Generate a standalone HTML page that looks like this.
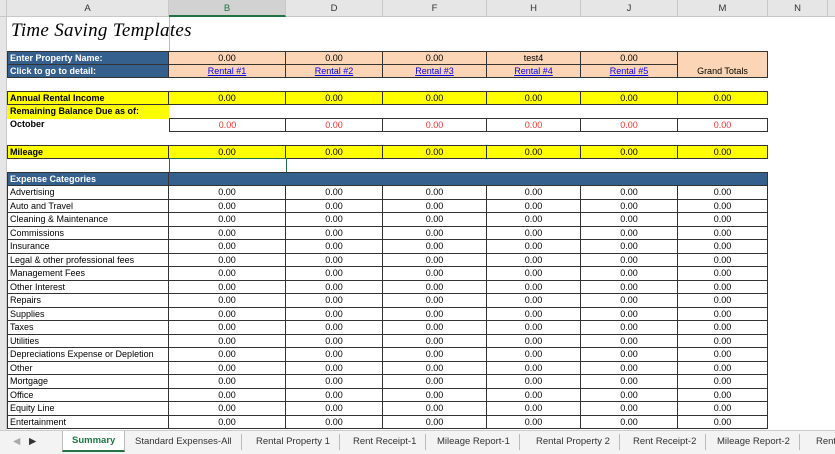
<!DOCTYPE html>
<html><head><meta charset="utf-8"><style>
*{margin:0;padding:0;box-sizing:border-box}
body{width:835px;height:454px;overflow:hidden;background:#fff;font-family:"Liberation Sans",sans-serif;font-size:9px;color:#000;position:relative}
.hdr{position:absolute;top:0;left:0;width:835px;height:17px;background:#e6e6e6;border-bottom:1px solid #c8c8c8}
.hdr div{position:absolute;top:0;height:17px;line-height:17px;text-align:center;border-right:1px solid #c8c8c8;font-size:9.5px;color:#333}
.hdr .sel{background:#d2d2d2;color:#217346;border-bottom:2px solid #217346}
.rh{position:absolute;left:0;top:17px;width:7px;height:413px;background:#e6e6e6;border-right:1px solid #c8c8c8}
.r{position:absolute;left:7px;height:13.5px;display:flex}
.r div{height:13.5px;line-height:12.5px;border-bottom:1px solid #333;border-right:1px solid #333;text-align:center;white-space:nowrap;overflow:hidden}
.a{width:162px;text-align:left!important;padding-left:2px;border-left:1px solid #333}
.b{width:117px}.d{width:97px}.f{width:104px}.h{width:94px}.j{width:97px}.m{width:90px}
.blue div{background:#355f8d;color:#fff;font-weight:bold}
.peach{background:#fbd5b5}
.yel div{background:#ffff00}
.bold{font-weight:bold}
.red{color:#e33}
a{color:#00e;text-decoration:underline}
.tabs{position:absolute;top:430px;left:0;width:835px;height:24px;background:#f3f3f3;border-top:1px solid #ccc;font-size:9.5px;color:#333}
.tabs span{position:absolute;top:3px;height:16px;line-height:16px;padding:0 9px;border-right:1px solid #bbb}
</style></head><body>
<div class="hdr">
<div style="left:0;width:7px"></div>
<div style="left:7px;width:162px">A</div>
<div class="sel" style="left:169px;width:117px">B</div>
<div style="left:286px;width:97px">D</div>
<div style="left:383px;width:104px">F</div>
<div style="left:487px;width:94px">H</div>
<div style="left:581px;width:97px">J</div>
<div style="left:678px;width:90px">M</div>
<div style="left:768px;width:60px">N</div>
</div>
<div class="rh"></div>
<div style="position:absolute;left:169px;top:17px;width:1px;height:34px;background:#bbb"></div>
<div style="position:absolute;left:11px;top:20px;font-family:'Liberation Serif',serif;font-style:italic;font-size:19px;letter-spacing:0.3px">Time Saving Templates</div>

<div class="r" style="top:51px"><div class="a" style="background:#355f8d;color:#fff;font-weight:bold;border-top:1px solid #333">Enter Property Name:</div><div class="b peach" style="border-top:1px solid #333">0.00</div><div class="d peach" style="border-top:1px solid #333">0.00</div><div class="f peach" style="border-top:1px solid #333">0.00</div><div class="h peach" style="border-top:1px solid #333">test4</div><div class="j peach" style="border-top:1px solid #333">0.00</div><div class="m peach" style="border-bottom:none;border-top:1px solid #333"></div></div>
<div class="r" style="top:64.5px"><div class="a" style="background:#355f8d;color:#fff;font-weight:bold">Click to go to detail:</div><div class="b peach"><a>Rental #1</a></div><div class="d peach"><a>Rental #2</a></div><div class="f peach"><a>Rental #3</a></div><div class="h peach"><a>Rental #4</a></div><div class="j peach"><a>Rental #5</a></div><div class="m peach">Grand Totals</div></div>

<div class="r yel" style="top:91px"><div class="a bold" style="border-top:1px solid #333">Annual Rental Income</div><div class="b" style="border-top:1px solid #333">0.00</div><div class="d" style="border-top:1px solid #333">0.00</div><div class="f" style="border-top:1px solid #333">0.00</div><div class="h" style="border-top:1px solid #333">0.00</div><div class="j" style="border-top:1px solid #333">0.00</div><div class="m" style="border-top:1px solid #333">0.00</div></div>
<div class="r" style="top:105px"><div class="a bold" style="background:#ffff00;border:none;padding-left:3px">Remaining Balance Due as of:</div></div>
<div class="r" style="top:118px"><div class="a bold" style="border:none;padding-left:3px">October</div><div class="b red" style="border-left:1px solid #333;border-top:1px solid #333">0.00</div><div class="d red" style="border-top:1px solid #333">0.00</div><div class="f red" style="border-top:1px solid #333">0.00</div><div class="h red" style="border-top:1px solid #333">0.00</div><div class="j red" style="border-top:1px solid #333">0.00</div><div class="m red" style="border-top:1px solid #333">0.00</div></div>
<div class="r yel" style="top:145px"><div class="a bold" style="border-top:1px solid #333">Mileage</div><div class="b" style="border-top:1px solid #333">0.00</div><div class="d" style="border-top:1px solid #333">0.00</div><div class="f" style="border-top:1px solid #333">0.00</div><div class="h" style="border-top:1px solid #333">0.00</div><div class="j" style="border-top:1px solid #333">0.00</div><div class="m" style="border-top:1px solid #333">0.00</div></div>
<div style="position:absolute;left:169px;top:158px;width:118px;height:15px;border:1px solid #217346"></div>
<div class="r blue" style="top:172px"><div class="a" style="border-top:1px solid #333">Expense Categories</div><div style="width:599px;border-right:1px solid #333;border-top:1px solid #333"></div></div>

<div class="r" style="top:186px"><div class="a">Advertising</div><div class="b">0.00</div><div class="d">0.00</div><div class="f">0.00</div><div class="h">0.00</div><div class="j">0.00</div><div class="m">0.00</div></div>
<div class="r" style="top:199.5px"><div class="a">Auto and Travel</div><div class="b">0.00</div><div class="d">0.00</div><div class="f">0.00</div><div class="h">0.00</div><div class="j">0.00</div><div class="m">0.00</div></div>
<div class="r" style="top:213px"><div class="a">Cleaning &amp; Maintenance</div><div class="b">0.00</div><div class="d">0.00</div><div class="f">0.00</div><div class="h">0.00</div><div class="j">0.00</div><div class="m">0.00</div></div>
<div class="r" style="top:226.5px"><div class="a">Commissions</div><div class="b">0.00</div><div class="d">0.00</div><div class="f">0.00</div><div class="h">0.00</div><div class="j">0.00</div><div class="m">0.00</div></div>
<div class="r" style="top:240px"><div class="a">Insurance</div><div class="b">0.00</div><div class="d">0.00</div><div class="f">0.00</div><div class="h">0.00</div><div class="j">0.00</div><div class="m">0.00</div></div>
<div class="r" style="top:253.5px"><div class="a">Legal &amp; other professional fees</div><div class="b">0.00</div><div class="d">0.00</div><div class="f">0.00</div><div class="h">0.00</div><div class="j">0.00</div><div class="m">0.00</div></div>
<div class="r" style="top:267px"><div class="a">Management Fees</div><div class="b">0.00</div><div class="d">0.00</div><div class="f">0.00</div><div class="h">0.00</div><div class="j">0.00</div><div class="m">0.00</div></div>
<div class="r" style="top:280.5px"><div class="a">Other Interest</div><div class="b">0.00</div><div class="d">0.00</div><div class="f">0.00</div><div class="h">0.00</div><div class="j">0.00</div><div class="m">0.00</div></div>
<div class="r" style="top:294px"><div class="a">Repairs</div><div class="b">0.00</div><div class="d">0.00</div><div class="f">0.00</div><div class="h">0.00</div><div class="j">0.00</div><div class="m">0.00</div></div>
<div class="r" style="top:307.5px"><div class="a">Supplies</div><div class="b">0.00</div><div class="d">0.00</div><div class="f">0.00</div><div class="h">0.00</div><div class="j">0.00</div><div class="m">0.00</div></div>
<div class="r" style="top:321px"><div class="a">Taxes</div><div class="b">0.00</div><div class="d">0.00</div><div class="f">0.00</div><div class="h">0.00</div><div class="j">0.00</div><div class="m">0.00</div></div>
<div class="r" style="top:334.5px"><div class="a">Utilities</div><div class="b">0.00</div><div class="d">0.00</div><div class="f">0.00</div><div class="h">0.00</div><div class="j">0.00</div><div class="m">0.00</div></div>
<div class="r" style="top:348px"><div class="a">Depreciations Expense or Depletion</div><div class="b">0.00</div><div class="d">0.00</div><div class="f">0.00</div><div class="h">0.00</div><div class="j">0.00</div><div class="m">0.00</div></div>
<div class="r" style="top:361.5px"><div class="a">Other</div><div class="b">0.00</div><div class="d">0.00</div><div class="f">0.00</div><div class="h">0.00</div><div class="j">0.00</div><div class="m">0.00</div></div>
<div class="r" style="top:375px"><div class="a">Mortgage</div><div class="b">0.00</div><div class="d">0.00</div><div class="f">0.00</div><div class="h">0.00</div><div class="j">0.00</div><div class="m">0.00</div></div>
<div class="r" style="top:388.5px"><div class="a">Office</div><div class="b">0.00</div><div class="d">0.00</div><div class="f">0.00</div><div class="h">0.00</div><div class="j">0.00</div><div class="m">0.00</div></div>
<div class="r" style="top:402px"><div class="a">Equity Line</div><div class="b">0.00</div><div class="d">0.00</div><div class="f">0.00</div><div class="h">0.00</div><div class="j">0.00</div><div class="m">0.00</div></div>
<div class="r" style="top:415.5px"><div class="a">Entertainment</div><div class="b">0.00</div><div class="d">0.00</div><div class="f">0.00</div><div class="h">0.00</div><div class="j">0.00</div><div class="m">0.00</div></div>

<div class="tabs">
<span style="left:4px;border:none;color:#aaa">&#9664;</span><span style="left:20px;border:none;color:#333">&#9654;</span>
<span style="left:62px;top:0;height:21px;line-height:19px;background:#fff;color:#217346;font-weight:bold;border-bottom:2px solid #217346;border-left:1px solid #bbb">Summary</span>
<span style="left:126px">Standard Expenses-All</span>
<span style="left:247px">Rental Property 1</span>
<span style="left:344px">Rent Receipt-1</span>
<span style="left:428px">Mileage Report-1</span>
<span style="left:527px">Rental Property 2</span>
<span style="left:624px">Rent Receipt-2</span>
<span style="left:708px">Mileage Report-2</span>
<span style="left:807px;border:none">Rent</span>
</div>
</body></html>
